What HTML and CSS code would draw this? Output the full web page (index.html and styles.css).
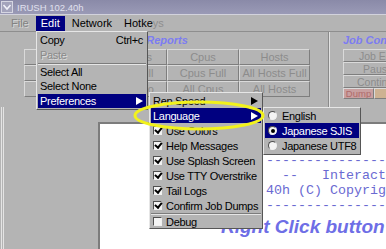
FILE: index.html
```html
<!DOCTYPE html>
<html lang="en">
<head>
  <meta charset="UTF-8" />
  <title>IRUSH 102.40h</title>
  <link rel="stylesheet" href="styles.css">
</head>
<body>
  <div class="titlebar">
    <svg class="sysicon" width="12" height="12" viewBox="0 0 12 12">
      <rect x="0.5" y="0.5" width="11" height="11" fill="#a4a4bc" stroke="#d6d6e2"/>
      <polyline points="2.5,4 6,8 9.5,4" fill="none" stroke="#f2f2fa" stroke-width="1.6"/>
    </svg>
    <span class="title">IRUSH 102.40h</span>
  </div>

  <div class="menubar">
    <span class="mi dim">File</span>
    <span class="mi on">Edit</span>
    <span class="mi">Network</span>
    <span class="mi">Hotke<span class="fade">ys</span></span>
  </div>

  <div class="top">
    <div class="group reports">
      <div class="glabel center">Reports</div>
      <div class="grid">
        <div class="btn">Jobs</div><div class="btn">My Jobs</div><div class="btn">Cpus</div><div class="btn">Hosts</div>
        <div class="btn">Full</div><div class="btn">Jobs Full</div><div class="btn">Cpus Full</div><div class="btn">All Hosts Full</div>
        <div class="btn">Info</div><div class="btn">Jobs Info</div><div class="btn">All Cpus</div><div class="btn">All Hosts</div>
      </div>
    </div>
    <div class="group jobs">
      <div class="glabel">Job Control</div>
      <div class="jbtn">Job Edit</div>
      <div class="jbtn">Pause</div>
      <div class="jbtn">Continue</div>
      <div class="jrow">
        <div class="jbtn dump">Dump</div>
        <div class="jbtn warn">Log</div>
      </div>
    </div>
  </div>

  <div class="bottom">
    <div class="side"></div>
    <div class="console">
<pre class="banner">----------------------------------------
  --   Interactive Rush Render Queue   --
40h (C) Copyright 1995,2004 Greg Ercolano
----------------------------------------</pre>
      <div class="hint">Right Click button</div>
    </div>
  </div>

  <!-- open menus -->
  <div class="menu edit">
    <div class="it short">Copy<span class="acc">Ctrl+c</span></div>
    <div class="it short dim">Paste</div>
    <div class="sep"></div>
    <div class="it short">Select All</div>
    <div class="it short">Select None</div>
    <div class="it short on">Preferences<span class="arr"></span></div>
  </div>

  <div class="menu prefs">
    <div class="it">Rep Speed<span class="arr"></span></div>
    <div class="it on">Language<span class="arr"></span></div>
    <div class="it"><span class="cb on"></span>Use Colors</div>
    <div class="it"><span class="cb on"></span>Help Messages</div>
    <div class="it"><span class="cb on"></span>Use Splash Screen</div>
    <div class="it"><span class="cb on"></span>Use TTY Overstrike</div>
    <div class="it"><span class="cb on"></span>Tail Logs</div>
    <div class="it"><span class="cb on"></span>Confirm Job Dumps</div>
    <div class="sep"></div>
    <div class="it last"><span class="cb"></span>Debug</div>
  </div>

  <div class="menu lang">
    <div class="it"><span class="rb"></span>English</div>
    <div class="it on"><span class="rb sel"></span>Japanese SJIS</div>
    <div class="it"><span class="rb"></span>Japanese UTF8</div>
  </div>

  <svg class="ring" width="386" height="249" viewBox="0 0 386 249">
    <ellipse cx="199" cy="115.5" rx="64" ry="13.5" fill="none" stroke="#f2f21c" stroke-width="3"/>
  </svg>
</body>
</html>
```

FILE: styles.css
```css
* {
  box-sizing: border-box;
}

html, body {
  margin: 0;
  width: 386px;
  height: 249px;
  overflow: hidden;
}

body {
  position: relative;
  background: #b4b4b4;
  font-family: "Liberation Sans", Arial, sans-serif;
  font-size: 11px;
  color: #000;
}

/* window chrome */
.titlebar {
  height: 15px;
  display: flex;
  align-items: center;
  gap: 4px;
  padding-left: 1px;
  background: linear-gradient(#8a8aa8, #9a9ab6);
  border-bottom: 1px solid #d2d2dc;
}

.title {
  color: #e0e0ee;
  font-size: 9.5px;
}

.menubar {
  height: 16px;
  display: flex;
  gap: 2px;
  padding-left: 6px;
}

.mi {
  padding: 0 5px;
  line-height: 15px;
  margin-top: 1px;
}

.mi.dim {
  color: #828282;
  text-shadow: 1px 1px #d6d6d6;
}

.mi.on {
  background: #000080;
  color: #fff;
}

.fade {
  color: #8e8e8e;
}

/* top button panels */
.top {
  height: 76px;
  display: flex;
  border-top: 1px solid #8e8e8e;
}

.group {
  padding-top: 1px;
}

.reports {
  flex: 0 0 329px;
  padding-left: 24px;
  border-right: 1px solid #8a8a8a;
}

.jobs {
  flex: 1;
  min-width: 0;
  overflow: hidden;
  padding-left: 13px;
  border-left: 1px solid #e2e2e2;
}

.glabel {
  height: 14px;
  line-height: 14px;
  font-style: italic;
  font-weight: bold;
  color: #7c7cf2;
  margin-bottom: 2px;
  white-space: nowrap;
}

.glabel.center {
  width: 286px;
  text-align: center;
}

.grid {
  display: grid;
  grid-template-columns: 72px 71px 72px 71px;
  grid-auto-rows: 16px;
}

.btn, .jbtn {
  display: flex;
  align-items: center;
  justify-content: center;
  white-space: nowrap;
  overflow: hidden;
  color: #8c8c8c;
  border: 1px solid;
  border-color: #dadada #7e7e7e #7e7e7e #dadada;
}

.jbtn {
  flex-shrink: 0;
  width: 70px;
  height: 13px;
  font-size: 10.5px;
}

.jrow {
  display: flex;
  height: 11px;
}

.jrow .jbtn {
  height: 11px;
  font-size: 9.5px;
}

.jbtn.dump {
  width: 31px;
  background: #c9a0a0;
  color: #b06a6a;
}

.jbtn.warn {
  background: #cdb292;
  color: #a88a62;
}

/* lower area */
.bottom {
  display: flex;
  height: 142px;
}

.side {
  flex: 0 0 97px;
  margin-left: 1px;
  border-left: 3px double #e4e4e4;
}

.console {
  flex: 1;
  min-width: 0;
  margin-top: 15px;
  background: #fff;
  border-top: 2px solid #7c7c7c;
  border-left: 2px solid #7c7c7c;
  overflow: hidden;
  padding-left: 166px;
}

.banner {
  margin: 29px 0 0;
  font-family: "Liberation Mono", "Courier New", monospace;
  font-size: 13.33px;
  line-height: 15px;
  color: #6a6ad2;
  white-space: pre;
}

.hint {
  margin: 2px 0 0 -45px;
  font-size: 19px;
  line-height: 24px;
  font-weight: bold;
  font-style: italic;
  color: #6e6ee6;
  white-space: nowrap;
}

/* popup menus */
.menu {
  position: absolute;
  background: #b4b4b4;
  border: 1px solid;
  border-color: #e6e6e6 #565656 #565656 #e6e6e6;
  padding: 0 1px;
  letter-spacing: -0.3px;
}

.edit {
  left: 36px;
  top: 31px;
  width: 112px;
  padding: 1px;
}

.prefs {
  left: 149px;
  top: 92px;
  width: 114px;
}

.lang {
  left: 263px;
  top: 107px;
  width: 98px;
  padding-bottom: 1px;
}

.it {
  height: 15px;
  display: flex;
  align-items: center;
  padding: 0 3px 0 2px;
  white-space: nowrap;
}

.it.short {
  height: 14.5px;
}

.it.last {
  height: 13px;
}

.it.on {
  background: #000080;
  color: #fff;
}

.it.dim {
  color: #8a8a8a;
  text-shadow: 1px 1px #dcdcdc;
}

.acc {
  margin-left: auto;
}

.sep {
  border-top: 1px solid #7c7c7c;
  border-bottom: 1px solid #e6e6e6;
}

.edit .sep {
  margin-top: 0.5px;
}

.arr {
  flex-shrink: 0;
  margin-left: auto;
  width: 0;
  height: 0;
  border-left: 7px solid #000;
  border-top: 4px solid transparent;
  border-bottom: 4px solid transparent;
}

.on .arr {
  border-left-color: #fff;
}

.cb {
  flex-shrink: 0;
  width: 9px;
  height: 9px;
  margin: 0 4px 0 0;
  border: 1px solid;
  border-color: #505050 #f0f0f0 #f0f0f0 #505050;
  background: #f4f4f4;
  position: relative;
}

.cb.on::after {
  content: "";
  position: absolute;
  left: 1.5px;
  top: -1px;
  width: 2.5px;
  height: 5px;
  border-right: 2px solid #000;
  border-bottom: 2px solid #000;
  transform: rotate(40deg);
}

.rb {
  flex-shrink: 0;
  width: 9px;
  height: 9px;
  margin: 0 5px 0 1px;
  border-radius: 50%;
  border: 1px solid;
  border-color: #4e4e4e #f0f0f0 #f0f0f0 #4e4e4e;
  background: #f4f4f4;
  position: relative;
}

.rb.sel::after {
  content: "";
  position: absolute;
  left: 1.5px;
  top: 1.5px;
  width: 4px;
  height: 4px;
  border-radius: 50%;
  background: #000;
}

.ring {
  position: absolute;
  left: 0;
  top: 0;
  pointer-events: none;
}
```
